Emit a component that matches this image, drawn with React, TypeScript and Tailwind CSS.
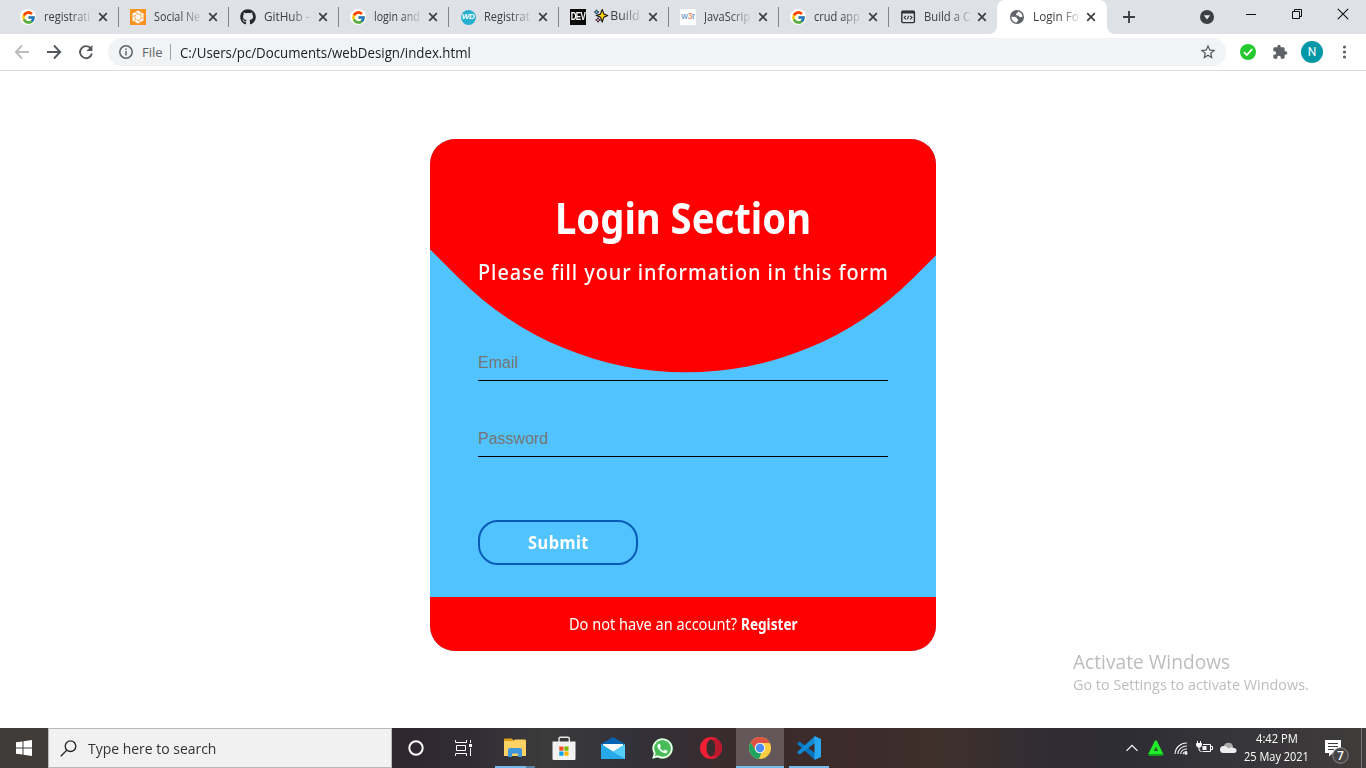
import { useLayoutEffect, useRef, type ReactNode } from "react";
import { FcGoogle } from "react-icons/fc";
import { FaGithub, FaWhatsapp } from "react-icons/fa";
import { MdExtension, MdStarBorder } from "react-icons/md";

const UI = "font-['Open_Sans','Noto_Sans',sans-serif]";
const FORM = "font-['Noto_Sans','Open_Sans',sans-serif]";

/* Single line of text that is condensed or widened to fill its box. */
function Fit({ className, children }: { className: string; children: ReactNode }) {
  const box = useRef<HTMLDivElement>(null);
  const text = useRef<HTMLSpanElement>(null);
  useLayoutEffect(() => {
    if (box.current && text.current) {
      text.current.style.transform = `scaleX(${box.current.clientWidth / text.current.offsetWidth})`;
    }
  }, []);
  return (
    <div ref={box} className={`shrink-0 whitespace-nowrap ${className}`}>
      <span ref={text} className="inline-block origin-left">{children}</span>
    </div>
  );
}

function Google() {
  return (
    <span className="flex size-4 items-center justify-center rounded-full bg-white">
      <FcGoogle size={15} />
    </span>
  );
}

function SocialIcon() {
  return (
    <svg width="16" height="16" viewBox="0 0 16 16">
      <rect width="16" height="16" fill="#f7931e" />
      <path d="M8 1.5 13.5 4.5V11.5L8 14.5 2.5 11.5V4.5Z" fill="#fff" />
      <path d="M8 4.5 11 6.2V9.8L8 11.5 5 9.8V6.2ZM8 4.5 5 3M11 6.2 11.2 3M11 9.8 13.5 8M8 11.5 11 13M5 9.8 4.8 13M5 6.2 2.5 8" fill="none" stroke="#f7931e" strokeWidth=".7" />
    </svg>
  );
}

function Sparkles() {
  return (
    <svg width="14" height="14" viewBox="0 0 14 14" className="shrink-0">
      <path d="M8 .5 9.7 5 13.5 6.5 9.7 8.2 8 13 6.3 8.2 2.5 6.5 6.3 5Z" fill="#fcd116" stroke="#111" strokeWidth="1" />
      <path d="M2.5.8 3.3 2.3 4.8 3 3.3 3.9 2.5 5.3 1.7 3.9.3 3 1.7 2.3Z" fill="#62c5f5" stroke="#111" strokeWidth=".8" />
      <path d="M4 8.7 4.8 10.2 6.4 11 4.8 11.8 4 13.4 3.2 11.8 1.6 11 3.2 10.2Z" fill="#f291c7" stroke="#111" strokeWidth=".8" />
    </svg>
  );
}

function CodeWindow() {
  return (
    <svg width="16" height="16" viewBox="0 0 16 16" fill="none" stroke="#303236">
      <rect x="1.8" y="2.2" width="12.6" height="11.4" rx="1" strokeWidth="1.4" />
      <path d="M1.8 3.2H14.4" strokeWidth="2.6" />
      <path d="M6 6.8 4.2 8.6 6 10.4M10.2 6.8 12 8.6 10.2 10.4M8.7 6.8 7.4 10.4" strokeWidth="1.1" />
    </svg>
  );
}

function Globe() {
  return (
    <svg width="16" height="16" viewBox="0 0 16 16">
      <circle cx="8" cy="8" r="7" fill="#5f6368" />
      <path d="M2.4 7.8C4 7.6 6.2 7.4 7.2 8.3 8 9 7.6 10 8.6 10.1 9.4 10.3 9.2 11.4 8.6 12 8.2 12.5 7.8 13 7.6 13.6 4.7 13.4 2.4 11 2.4 7.8Z" fill="#fff" />
      <path d="M8.6 2.4C11.4 2.7 13.5 5 13.6 7.7 12.4 7.4 11.9 8.4 10.9 8.1 9.8 7.8 10.2 6.6 9.2 6.6 8 6.7 6.9 6.2 7 5.2 7.1 4.3 8.6 4.4 8.6 3.5Z" fill="#fff" />
    </svg>
  );
}

const tabs: { icon: ReactNode; title: ReactNode }[] = [
  { icon: <Google />, title: "registrati" },
  { icon: <SocialIcon />, title: "Social Ne" },
  { icon: <FaGithub size={16} color="#24292e" />, title: "GitHub -" },
  { icon: <Google />, title: "login and" },
  {
    icon: (
      <span className="flex size-[15px] items-center justify-center rounded-full bg-[#27afd0] font-['Liberation_Sans',sans-serif] text-[8px] font-bold italic tracking-[-0.5px] text-white">WD</span>
    ),
    title: "Registrat",
  },
  {
    icon: (
      <span className="flex size-4 items-center justify-center bg-[#0b0b0b] font-['Liberation_Sans',sans-serif] text-[8px] font-bold tracking-[-0.6px] text-white">
        <span className="scale-y-125">DEV</span>
      </span>
    ),
    title: (
      <span className="flex items-center gap-[2px] pt-px"><Sparkles />Build</span>
    ),
  },
  {
    icon: (
      <span className="flex size-4 items-center justify-center bg-white font-['Liberation_Sans',sans-serif] text-[9px] tracking-[-0.3px] text-[#4b86c8]">w<span className="text-[#ef7438]">3</span>r</span>
    ),
    title: "JavaScrip",
  },
  { icon: <Google />, title: "crud app" },
  { icon: <CodeWindow />, title: "Build a C" },
];

function Close() {
  return (
    <svg width="10" height="10" viewBox="0 0 10 10" className="shrink-0">
      <path d="M1.2 1.2 8.8 8.8M8.8 1.2 1.2 8.8" stroke="#3c4043" strokeWidth="1.7" />
    </svg>
  );
}

function Tab({ icon, title, active = false, tight = false }: { icon: ReactNode; title: ReactNode; active?: boolean; tight?: boolean }) {
  return (
    <div className={`flex h-[34px] w-[110px] shrink-0 items-center pl-3 ${active ? "rounded-t-lg bg-white" : ""}`}>
      <span className="flex size-4 shrink-0 items-center justify-center">{icon}</span>
      <Fit className="ml-2 w-[46px] text-[12px] text-[#3c4043] [mask-image:linear-gradient(to_right,black_58%,rgba(0,0,0,0.15)_100%)]">{title}</Fit>
      <span className={`flex ${active || tight ? "ml-[7px]" : "ml-2"}`}><Close /></span>
    </div>
  );
}

function TabStrip() {
  return (
    <div className="flex h-[34px] bg-[#dee1e6] pl-2">
      {tabs.map((t, i) => (
        <div key={i} className={`flex shrink-0 items-center ${i === 8 ? "w-[109px]" : "w-[110px]"}`}>
          <div className="w-[110px]"><Tab icon={t.icon} title={t.title} tight={i === 8} /></div>
          {i < 8 && <div className="-ml-px h-5 w-px shrink-0 translate-x-px bg-[#808387]" />}
        </div>
      ))}
      <div className="relative">
        <svg className="absolute bottom-0 -left-2" width="8" height="8"><path d="M8 0V8H0A8 8 0 0 0 8 0Z" fill="#fff" /></svg>
        <Tab icon={<Globe />} title="Login Fo" active />
        <svg className="absolute -right-2 bottom-0" width="8" height="8"><path d="M0 0V8H8A8 8 0 0 1 0 0Z" fill="#fff" /></svg>
      </div>
      <div className="ml-[15px] flex items-center">
        <svg width="14" height="14"><path d="M7 1V13M1 7H13" stroke="#3c4043" strokeWidth="1.9" /></svg>
      </div>
      <div className="ml-16 flex items-center">
        <svg width="14" height="14"><circle cx="7" cy="7" r="7" fill="#3c4043" /><path d="M3.8 5.3H10.2L7 9.6Z" fill="#e6e8eb" /></svg>
      </div>
      <div className="ml-[31px] flex h-[28px] items-center">
        <svg width="12" height="12"><path d="M1 6.5H11" stroke="#111" /></svg>
        <svg className="ml-[34px]" width="12" height="12" fill="none" stroke="#111"><path d="M1.5 3.5H8.5V10.5H1.5ZM3.5 3.5V1.5H10.5V8.5H8.5" /></svg>
        <svg className="ml-[34px]" width="12" height="12"><path d="M.8.8 11.2 11.2M11.2.8.8 11.2" stroke="#111" strokeWidth="1.1" /></svg>
      </div>
    </div>
  );
}

function Toolbar() {
  return (
    <div className="flex h-[37px] items-center border-b border-[#d9dbde] bg-white pl-[14px]">
      <svg width="16" height="16" fill="none" stroke="#babcbe" strokeWidth="1.9"><path d="M15 8H2M8 1.5 1.8 8 8 14.5" /></svg>
      <svg className="ml-4" width="16" height="16" fill="none" stroke="#54585d" strokeWidth="1.9"><path d="M1 8H14M8 1.5 14.2 8 8 14.5" /></svg>
      <svg className="ml-4" width="16" height="16" viewBox="0 0 16 16"><path d="M12.9 4.6A6 6 0 1 0 13.9 9.5" fill="none" stroke="#54585d" strokeWidth="1.9" /><path d="M14.4 1V7H8.4Z" fill="#54585d" /></svg>
      <div className="ml-[14px] flex h-7 w-[1118px] items-center rounded-full bg-[#f1f3f4] pl-[11px]">
        <svg width="14" height="14" fill="none" stroke="#5f6368" strokeWidth="1.5"><circle cx="7" cy="7" r="6.2" /><path d="M7 6V10.6M7 3.4V5" /></svg>
        <Fit className="ml-[9px] w-[21px] pt-px text-[13px] text-[#5f6368]">File</Fit>
        <div className="ml-[7px] h-4 w-px bg-[#9da0a3]" />
        <Fit className="ml-[9px] w-[291px] text-[14px] text-[#202124]">C:/Users/pc/Documents/webDesign/index.html</Fit>
        <MdStarBorder className="mr-[9px] ml-auto" size={18} color="#54585d" />
      </div>
      <svg className="ml-[14px]" width="16" height="16"><circle cx="8" cy="8" r="8" fill="#25c92d" /><path d="M3.8 8.2 6.8 11 12.3 5" fill="none" stroke="#fff" strokeWidth="1.8" /></svg>
      <MdExtension className="ml-4" size={16} color="#5f6368" />
      <span className="ml-[13px] flex size-[22px] items-center justify-center rounded-full bg-[#0097a7] font-[Roboto,sans-serif] text-[12px] text-white">N</span>
      <svg className="ml-[19px]" width="5" height="14" fill="#5f6368"><circle cx="2.5" cy="2" r="1.6" /><circle cx="2.5" cy="7" r="1.6" /><circle cx="2.5" cy="12" r="1.6" /></svg>
    </div>
  );
}

function LoginCard() {
  return (
    <div className={`relative flex h-[512px] w-[506px] flex-col overflow-hidden rounded-[25px] bg-[#51c4ff] ${FORM}`}>
      <div className="absolute -top-[358px] -left-[44.5px] size-[600px] rotate-45 rounded-br-[321px] bg-[#ff0000]" />
      <div className="relative flex flex-1 flex-col px-12">
        <Fit className="mt-[49px] ml-[77px] h-[60px] w-[256px] text-[43px] leading-[60px] font-bold text-white">Login Section</Fit>
        <Fit className="mt-[9px] h-[30px] w-[411px] text-[21px] leading-[30px] font-medium tracking-[1px] text-white">Please fill your information in this form</Fit>
        <input placeholder="Email" className="mt-[57px] h-[37px] border-b border-black bg-transparent pt-[2px] font-['Liberation_Sans',sans-serif] text-base text-black outline-none placeholder:text-[#757575]" />
        <input placeholder="Password" type="password" className="mt-[39px] h-[37px] border-b border-black bg-transparent pt-[2px] font-['Liberation_Sans',sans-serif] text-base text-black outline-none placeholder:text-[#757575]" />
        <button className="mt-[63px] flex h-[45px] w-40 items-center justify-center rounded-[20px] border-2 border-[#0a5bb8] text-white">
          <Fit className="w-[61px] text-left text-[17.5px] font-bold tracking-[0.5px]">Submit</Fit>
        </button>
      </div>
      <div className="relative flex h-[54px] items-center justify-center gap-1 bg-[#ff0000] pt-[2px] text-[15.5px] text-white">
        <Fit className="w-[168px]">Do not have an account?</Fit>
        <Fit className="w-[57px] font-bold">Register</Fit>
      </div>
    </div>
  );
}

function Explorer() {
  return (
    <svg width="22" height="20" viewBox="0 0 22 20">
      <path d="M0 1.5Q0 .5 1 .5H8L10 3H0Z" fill="#e2a11a" />
      <path d="M0 3H9L11 1.5H21Q22 1.5 22 3V18H0Z" fill="#fbd263" />
      <path d="M4 12Q4 10 6 10H16Q18 10 18 12V19H14V15.5H8V19H4Z" fill="#3f96dc" />
    </svg>
  );
}

function Store() {
  return (
    <svg width="24" height="24" viewBox="0 0 24 24">
      <path d="M7 6V2.5Q7 1.2 8.3 1.2H16Q17.3 1.2 17.3 2.5V6" fill="none" stroke="#e9e9e9" strokeWidth="1.4" />
      <path d="M.5 5.5H23.5V23Q23.5 24 22.5 24H1.5Q.5 24 .5 23Z" fill="#f2f2f2" />
      <path d="M7.3 10.5H11.5V14.7H7.3Z" fill="#f25022" /><path d="M12.3 10.5H16.5V14.7H12.3Z" fill="#7fba00" />
      <path d="M7.3 15.5H11.5V19.7H7.3Z" fill="#00a4ef" /><path d="M12.3 15.5H16.5V19.7H12.3Z" fill="#ffb900" />
    </svg>
  );
}

function Mail() {
  return (
    <svg width="24" height="22" viewBox="0 0 24 22">
      <path d="M0 7 12 0 24 7V13H0Z" fill="#0764b5" />
      <path d="M2 7H22V12L12 18 2 12Z" fill="#fff" />
      <path d="M0 7 12 14.5 0 22Z" fill="#2fb5ee" />
      <path d="M0 22 24 7V22Z" fill="#55cdf9" />
      <path d="M0 7 15.5 17 24 22H0Z" fill="#27a8e8" />
    </svg>
  );
}

function WhatsApp() {
  return (
    <span className="relative flex size-[23px] items-center justify-center">
      <svg className="absolute inset-0" width="23" height="23" viewBox="0 0 23 23"><path d="M1 22 2.6 16.5A10.3 10.3 0 1 1 6.8 20.6Z" fill="#48bd57" /></svg>
      <FaWhatsapp className="relative" size={23} color="#f5fff5" />
    </span>
  );
}

function Opera() {
  return (
    <svg width="22" height="22" viewBox="0 0 22 22">
      <path fillRule="evenodd" d="M11 0A11 11 0 1 1 11 22 11 11 0 1 1 11 0ZM11 2.6C8.2 2.6 6.6 6.5 6.6 11S8.2 19.4 11 19.4 15.4 15.5 15.4 11 13.8 2.6 11 2.6Z" fill="#f21f33" />
      <path d="M11 2.6C13.3 1.7 15.6 1.8 18.3 2.9A11 11 0 0 1 18.3 19.1C15.6 20.3 13.3 20.3 11 19.4 13.8 19.4 15.4 15.5 15.4 11S13.8 2.6 11 2.6Z" fill="#b8192c" />
    </svg>
  );
}

function Chrome() {
  return (
    <svg width="22" height="22" viewBox="0 0 22 22">
      <circle cx="11" cy="11" r="11" fill="#ffcd42" />
      <path d="M1.5 5.5A11 11 0 0 1 20.5 5.5L21 6H11A5 5 0 0 0 6.7 13.5Z" fill="#dd5144" />
      <path d="M1.5 5.5 6.7 13.5A5 5 0 0 0 12.3 15.8L10 22A11 11 0 0 1 1.5 5.5Z" fill="#1da462" />
      <circle cx="11" cy="11" r="5.2" fill="#f1f1f1" /><circle cx="11" cy="11" r="4.2" fill="#4c8bf5" />
    </svg>
  );
}

function VsCode() {
  return (
    <svg width="24" height="24" viewBox="0 0 24 24">
      <path d="M0 7.8 2.6 5.6 18 17V24Z" fill="#0a75bd" />
      <path d="M0 16.2 2.6 18.4 18 7V0Z" fill="#128bd4" />
      <path d="M17.5 0 24 3V21L17.5 24Z" fill="#25a7f2" />
    </svg>
  );
}

const apps: { icon: ReactNode; bar: ReactNode; lit?: boolean }[] = [
  { icon: <Explorer />, bar: <><i className="h-0.5 w-[31px] bg-[#76b9ed]" /><i className="h-0.5 w-[9px] bg-[#557f9f]" /></> },
  { icon: <Store />, bar: null },
  { icon: <Mail />, bar: null },
  { icon: <WhatsApp />, bar: null },
  { icon: <Opera />, bar: null },
  { icon: <Chrome />, bar: <i className="h-0.5 w-12 bg-[#76b9ed]" />, lit: true },
  { icon: <VsCode />, bar: <i className="h-0.5 w-10 bg-[#76b9ed]" /> },
];

function Taskbar() {
  return (
    <div className="flex h-10 bg-[linear-gradient(90deg,#403c3a_0px,#403c3a_48px,#30262e_392px,#302c35_470px,#3b3b3b_545px,#33313a_630px,#392b2c_730px,#3c2b29_850px,#3e302c_950px,#302c34_1050px,#2e2c34_1130px,#343338_1200px,#3f3c3b_1366px)]">
      <div className="flex w-12 items-center justify-center">
        <svg width="16" height="16" fill="#fff"><path d="M0 2.3 6.5 1.4V7.5H0ZM7.5 1.2 16 0V7.5H7.5ZM0 8.5H6.5V14.6L0 13.7ZM7.5 8.5H16V16L7.5 14.8Z" /></svg>
      </div>
      <div className="flex w-[344px] items-center border border-[#b9b9b9] bg-[#f1f1f1] pl-[11px]">
        <svg width="17" height="17" fill="none" stroke="#222" strokeWidth="1.3"><circle cx="10.5" cy="6.2" r="5.3" /><path d="M6.8 10.1.8 16.2" /></svg>
        <Fit className="ml-[11px] w-32 pt-[2px] text-[14.5px] text-[#333]">Type here to search</Fit>
      </div>
      <div className="flex w-12 items-center justify-center">
        <svg width="16" height="16"><circle cx="8" cy="8" r="6.7" fill="none" stroke="#fff" strokeWidth="2" /></svg>
      </div>
      <div className="flex w-[51px] items-center justify-center pr-1">
        <svg width="17" height="16" fill="none" stroke="#fff"><path d="M.5 0V2.5H11.5V0M.5 16V13.5H11.5V16M1.5 5.5H10.5V10.5H1.5ZM15.5 0V3M15.5 8V16" /><path d="M14 5.5H17" strokeWidth="3" /></svg>
      </div>
      <div className="flex gap-px">
        {apps.map((a, i) => (
          <div key={i} className={`flex w-12 flex-col items-center ${a.lit ? "bg-[#635759]" : ""}`}>
            <div className="flex h-[38px] items-center pt-0.5">{a.icon}</div>
            <div className="flex">{a.bar}</div>
          </div>
        ))}
      </div>
      <div className={`ml-auto flex items-center ${UI} text-white`}>
        <svg width="12" height="8" fill="none" stroke="#fff" strokeWidth="1.2"><path d="M.5 6.8 6 1.3 11.5 6.8" /></svg>
        <svg className="ml-[10px]" width="16" height="16"><path d="M8 0 16 14.5 14 16H1L0 14Z" fill="#109b1e" /><path d="M7 .5 9 1 14.8 14H11L8 6.7 5.8 11H9.5L11 14H.5Z" fill="#23ec2b" /><path d="M8 7 10 11H6Z" fill="#2c5a30" /></svg>
        <svg className="ml-[10px]" width="14" height="14" fill="none" stroke="#eee" strokeWidth="1.1"><path d="M1 13A11.5 11.5 0 0 1 13 2M3.8 13A9 9 0 0 1 13 5M6.5 13A6.3 6.3 0 0 1 13 8M9 13A4 4 0 0 1 13 10.5" /><circle cx="12" cy="12.2" r="1" fill="#fff" /></svg>
        <svg className="ml-[8px]" width="17" height="14" fill="none" stroke="#fff"><path d="M7 3.5H14.5V10.5H6.5M15 5.5H16.5V8.5H15M1.5 0V2.5M4.5 0V2.5M3 5.5V8Q3 10.5 5.5 10.5" /><path d="M.5 2.5H5.5V4L4.5 6H1.5L.5 4Z" fill="#fff" /><path d="M6.5 5H10.5V9H6.5Z" fill="#fff" stroke="none" /></svg>
        <svg className="ml-[7px]" width="17" height="12"><path d="M4 7A4.4 4.4 0 0 1 8 .8C10.5.5 13 2 13 5L8 8Z" fill="#aaa" /><path d="M3.5 11A3.5 3.5 0 0 1 3.5 4C6 3.5 7.5 5.5 9 6.3 10.5 5 12.7 4.7 14 6 17.5 6.3 17.5 11 14 11Z" fill="#eee" /></svg>
        <div className="ml-[7px] flex w-[65px] flex-col items-center text-[12px] leading-[18px]">
          <Fit className="w-[42px]">4:42 PM</Fit>
          <Fit className="w-[65px]">25 May 2021</Fit>
        </div>
        <div className="relative top-1 ml-4 h-6 w-6">
          <svg width="24" height="24"><path d="M0 0H16V13H8L4 16.5V13H0Z" fill="#fff" /><path d="M3 3.5H13M3 6.5H13M3 9.5H9" stroke="#3c3b3c" /><circle cx="15.5" cy="15.5" r="7.7" fill="#454344" stroke="#8b8989" /></svg>
          <span className="absolute top-[7px] left-[12px] text-[12px] leading-[17px] font-semibold">7</span>
        </div>
        <div className="mr-1 ml-3 h-10 w-px bg-[#77757a]" />
      </div>
    </div>
  );
}

export default function App() {
  return (
    <div className={`flex h-[768px] w-[1366px] flex-col overflow-hidden bg-white ${UI}`}>
      <TabStrip />
      <Toolbar />
      <main className="relative flex flex-1 items-start justify-center pt-[68px]">
        <LoginCard />
        <div className="absolute top-[578px] left-[1073px] text-[#bdbdbd]">
          <Fit className="h-[25px] w-[157px] text-[20px] leading-[26px]">Activate Windows</Fit>
          <Fit className="h-[20px] w-[236px] text-[15px] leading-[20px]">Go to Settings to activate Windows.</Fit>
        </div>
      </main>
      <Taskbar />
    </div>
  );
}
